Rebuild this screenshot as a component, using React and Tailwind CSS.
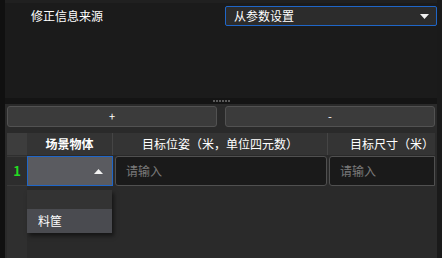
import React from 'react';

const font = { fontFamily: '"Noto Sans CJK SC", "Noto Sans", sans-serif' };

function Caret({ up }) {
    return (
        <svg width="9" height="5" viewBox="0 0 9 5" className="shrink-0">
            {up ? <path d="M0 5 L4.5 0 L9 5 Z" fill="#f2f2f2" /> : <path d="M0 0 L9 0 L4.5 5 Z" fill="#f2f2f2" />}
        </svg>
    );
}

export default function App() {
    return (
        <div className="w-[442px] h-[258px] flex bg-[#151515] overflow-hidden text-[12px] text-white" style={font}>
            <div className="w-[5px] bg-[#101010]" />
            <div className="flex-1 flex flex-col min-w-0">
                {/* top panel */}
                <div className="h-[98px] bg-[#1b1b1b] border-t-[3px] border-[#202020]">
                    <div className="flex items-center mt-[3px] h-[20px]">
                        <span className="pl-[26px] w-[220px] leading-none">修正信息来源</span>
                        <div className="flex-1 h-[20px] flex items-center justify-between pl-[8px] pr-[7px] bg-[#2c2c2c] border border-[#1f66c8] rounded-[2px]">
                            <span className="leading-none">从参数设置</span>
                            <Caret />
                        </div>
                    </div>
                </div>
                {/* splitter */}
                <div className="h-[6px] bg-[#141414] flex items-center justify-center gap-[1px]">
                    {[0, 1, 2, 3, 4, 5].map((i) => (
                        <div key={i} className="w-[2px] h-[2px] bg-[#5a5a5a]" />
                    ))}
                </div>
                {/* bottom panel */}
                <div className="flex-1 bg-[#2a2a2a] px-[2px] pt-[2px] flex flex-col">
                    <div className="flex gap-[8px] h-[21px]">
                        <div className="flex-1 flex items-center justify-center bg-[#3b3b3b] border border-[#525252] rounded-[3px] text-[11px]">+</div>
                        <div className="flex-1 flex items-center justify-center bg-[#3b3b3b] border border-[#525252] rounded-[3px] text-[11px]">-</div>
                    </div>
                    <div className="flex-1 flex mt-[6px]">
                        {/* row number column */}
                        <div className="w-[20px] flex flex-col bg-[#2f2f2f]">
                            <div className="h-[22px] bg-[#3d3d3d]" />
                            <div className="h-[30px] mt-[1px] flex items-center justify-center bg-[#2d2d2d] border-y border-[#3a3a3a] text-[#22dd22] font-bold text-[13px]">1</div>
                        </div>
                        {/* data area */}
                        <div className="flex-1 flex flex-col min-w-0 relative">
                            <div className="h-[22px] flex bg-[#343434] font-bold">
                                <div className="w-[86px] flex items-center justify-center border-r border-[#454545]">场景物体</div>
                                <div className="w-[215px] flex items-center justify-center border-r border-[#454545] font-normal">目标位姿（米，单位四元数）</div>
                                <div className="flex-1 flex items-center pl-[22px] font-normal whitespace-nowrap">目标尺寸（米）</div>
                            </div>
                            <div className="h-[30px] mt-[1px] flex gap-[2px] items-stretch">
                                <div className="w-[86px] flex items-center justify-end pr-[9px] bg-[#5a5b60] border border-[#1f66c8]">
                                    <Caret up />
                                </div>
                                <div className="w-[212px] flex items-center pl-[10px] bg-[#1a1a1a] border border-[#505050] rounded-[3px] text-[#7a7a7a]">请输入</div>
                                <div className="flex-1 flex items-center pl-[10px] bg-[#1a1a1a] border border-[#505050] rounded-l-[3px] text-[#7a7a7a]">请输入</div>
                            </div>
                            {/* dropdown list */}
                            <div className="absolute left-0 top-[57px] w-[85px] flex flex-col bg-[#333333] shadow-[2px_3px_4px_rgba(0,0,0,0.5)]">
                                <div className="h-[19px]" />
                                <div className="h-[24px] flex items-center pl-[11px] bg-[#4a4b50]">料筐</div>
                            </div>
                        </div>
                    </div>
                </div>
            </div>
            <div className="w-[5px] bg-[#1a1a1a]" />
        </div>
    );
}
